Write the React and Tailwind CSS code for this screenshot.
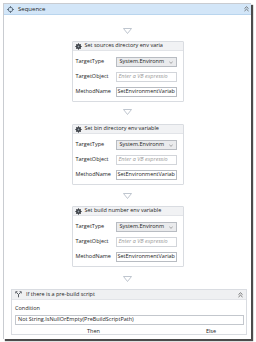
import React from "react";

const font = "font-['Open_Sans',sans-serif]";

function Arrow({ top, height }) {
  return (
    <div className={`flex w-full justify-center ${height}`}>
      <svg width="9" height="6" viewBox="0 0 9 6" className={top}>
        <path d="M0.5 0.5 H8.5 L4.5 5.5 Z" fill="white" stroke="#aeb7c3" strokeWidth="0.8" />
      </svg>
    </div>
  );
}

function GearIcon() {
  return (
    <svg width="7" height="7" viewBox="0 0 10 10" className="shrink-0">
      <circle cx="5" cy="5" r="3.6" fill="#3b3f45" />
      <path d="M5 0.5v2M5 7.5v2M0.5 5h2M7.5 5h2M1.8 1.8l1.4 1.4M6.8 6.8l1.4 1.4M1.8 8.2l1.4-1.4M6.8 3.2l1.4-1.4" stroke="#3b3f45" strokeWidth="1.4" />
      <circle cx="5" cy="5" r="1.3" fill="#9aa3ad" />
    </svg>
  );
}

function Field({ label, children }) {
  return (
    <div className="flex h-[10px] items-center">
      <span className="w-[40px] shrink-0 text-[#1e1e1e]">{label}</span>
      {children}
    </div>
  );
}

function InvokeCard({ title }) {
  return (
    <div className="w-[112px] rounded-[1px] border border-[#d9dce1] bg-white">
      <div className="flex h-[9px] items-center gap-[3px] border-b border-[#e2e4e8] bg-[#f1f2f4] px-[2px]">
        <GearIcon />
        <span className="whitespace-nowrap text-[#1e1e1e]">{title}</span>
      </div>
      <div className="flex flex-col gap-[5px] pb-[4px] pl-[3px] pr-[6px] pt-[6px]">
        <Field label="TargetType">
          <div className="flex h-[10px] w-[61px] items-center justify-between border border-[#b8bcc2] bg-[#eaebed] pl-[3px] pr-[3px]">
            <span className="text-[#1e1e1e]">System.Environm</span>
            <svg width="4" height="3" viewBox="0 0 4 3">
              <path d="M0.3 0.5 L2 2.4 L3.7 0.5" fill="none" stroke="#777" strokeWidth="0.6" />
            </svg>
          </div>
        </Field>
        <Field label="TargetObject">
          <div className="flex h-[10px] w-[61px] items-center border border-[#d2d5da] bg-white pl-[2px]">
            <span className="whitespace-nowrap italic text-[#9a9a9a]">Enter a VB expressio</span>
          </div>
        </Field>
        <Field label="MethodName">
          <div className="flex h-[10px] w-[61px] items-center border border-[#b8bcc2] bg-white pl-[1px]">
            <span className="whitespace-nowrap text-[#1e1e1e]">SetEnvironmentVariab</span>
          </div>
        </Field>
      </div>
    </div>
  );
}

function Collapse() {
  return (
    <svg width="5" height="6" viewBox="0 0 5 6" className="ml-auto">
      <path d="M0.5 2.6 L2.5 0.8 L4.5 2.6 M0.5 5 L2.5 3.2 L4.5 5" fill="none" stroke="#555" strokeWidth="0.8" />
    </svg>
  );
}

export default function App() {
  return (
    <div className={`h-[342px] w-[256px] overflow-hidden bg-white pl-[3px] pt-[3px] text-[5.5px] leading-none ${font}`}>
      <div className="flex h-[336px] w-[248px] flex-col overflow-hidden border-l border-t border-[#c9ccd1] bg-white shadow-[2px_2px_1px_#4b4b4b]">
        {/* Sequence header */}
        <div className="flex h-[11px] shrink-0 items-center border-b border-[#b9d5ee] bg-[#d3e6f8] pl-[3px] pr-[2px]">
          <svg width="7" height="7" viewBox="0 0 10 10" className="shrink-0">
            <circle cx="5" cy="5" r="3.2" fill="none" stroke="#5f6f80" strokeWidth="1.3" />
            <path d="M5 0v3M5 7v3M0 5h3M7 5h3" stroke="#5f6f80" strokeWidth="1.3" />
          </svg>
          <span className="ml-[4px] text-[6px] text-[#1e1e1e]">Sequence</span>
          <Collapse />
        </div>

        <div className="flex flex-col items-center">
          <Arrow top="mt-[13px]" height="h-[26px]" />
          <InvokeCard title="Set sources directory env varia" />
          <Arrow top="mt-[7px]" height="h-[22px]" />
          <InvokeCard title="Set bin directory env variable" />
          <Arrow top="mt-[8px]" height="h-[21px]" />
          <InvokeCard title="Set build number env variable" />
          <Arrow top="mt-[9px]" height="h-[22px]" />

          {/* If activity */}
          <div className="ml-[7px] w-[236px] self-start border border-[#d9dce1] bg-white">
            <div className="flex h-[10px] items-center border-b border-[#e2e4e8] bg-[#eff0f2] pl-[3px] pr-[3px]">
              <svg width="7" height="7" viewBox="0 0 10 10" className="shrink-0">
                <path d="M5 9V5M5 5L2 2M5 5L8 2" fill="none" stroke="#4a4f56" strokeWidth="1.3" />
                <path d="M1 3.5V1h2.5M9 3.5V1H6.5" fill="none" stroke="#4a4f56" strokeWidth="1.2" />
              </svg>
              <span className="ml-[4px] text-[#1e1e1e]">If there is a pre-build script</span>
              <Collapse />
            </div>
            <div className="px-[3px] pt-[6px]">
              <div className="text-[#1e1e1e]">Condition</div>
              <div className="mt-[3px] flex h-[10px] w-[229px] items-center border border-[#c3c7cd] pl-[2px] text-[#1e1e1e]">
                Not String.IsNullOrEmpty(PreBuildScriptPath)
              </div>
              <div className="mt-[4px] flex text-[#1e1e1e]">
                <span className="ml-[72px]">Then</span>
                <span className="ml-[106px]">Else</span>
              </div>
            </div>
          </div>
        </div>
      </div>
    </div>
  );
}
